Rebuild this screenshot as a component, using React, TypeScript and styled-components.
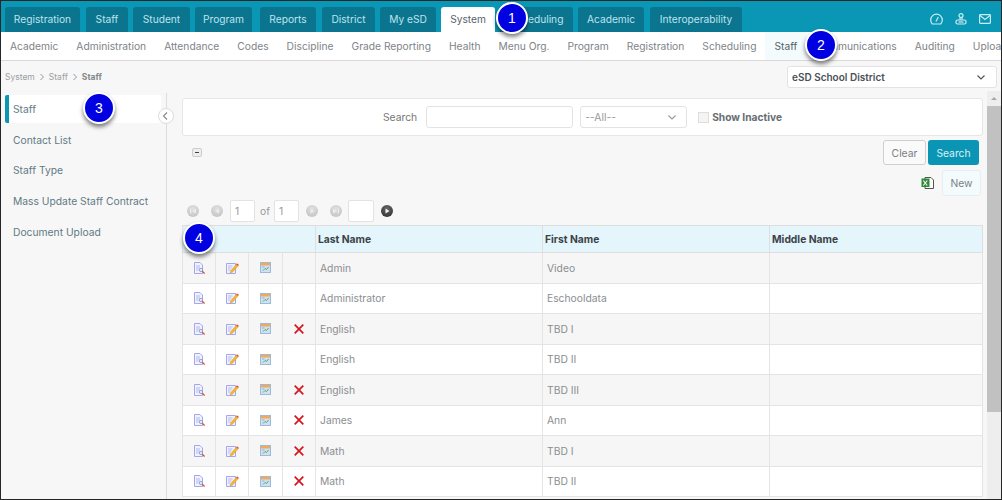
import React from "react";
import styled, { createGlobalStyle } from "styled-components";

const Global = createGlobalStyle`
  html, body { margin: 0; padding: 0; height: 500px; overflow: hidden; background: #f7f7f7; }
  * { box-sizing: border-box; }
  body { font-family: Inter, "Liberation Sans", sans-serif; }
`;
const Page = styled.div`
  position: relative; width: 1002px; height: 500px; overflow: hidden;
  display: flex; flex-direction: column; background: #f7f7f7;
  border: 1px solid #262626;
`;
const TopBar = styled.div`
  height: 31px; flex: none; background: #0a97b5; display: flex; align-items: flex-end; padding-left: 4px;
`;
const TopTab = styled.div<{ $w: number; $ml?: number; $active?: boolean }>`
  width: ${p => p.$w}px; margin-left: ${p => p.$ml ?? 5}px; height: 25px; flex: none;
  display: flex; align-items: center; justify-content: center;
  border-radius: 3px 3px 0 0; font-size: 10.2px; padding-bottom: 1px; white-space: nowrap;
  background: ${p => (p.$active ? "#ffffff" : "#0b7590")};
  color: ${p => (p.$active ? "#56636b" : "#bfe3ec")};
`;
const TopIcons = styled.div`
  margin-left: auto; display: flex; align-items: center; gap: 12px; padding: 0 10px 2px 0; height: 25px; color: #c9edf5;
`;
const SubBar = styled.div`
  height: 29px; flex: none; background: #fff; display: flex; align-items: stretch;
  padding-left: 9px; gap: 18px; border-bottom: 1px solid #d9d9d9; overflow: hidden;
`;
const SubItem = styled.div<{ $active?: boolean }>`
  display: flex; align-items: center; justify-content: center; font-size: 10.26px; color: ${p => (p.$active ? "#4f5f66" : "#7d8488")};
  white-space: nowrap; flex: none; margin-bottom: -1px; padding-bottom: 1px;
  ${p => p.$active ? `background:#f4fbfd;border-bottom:1px solid #0b95b4;padding:0 9px;margin:0 -9px -1px;` : ""}
`;
const Body = styled.div`
  flex: 1; min-height: 0; display: flex;
`;
const Left = styled.div`
  width: 166px; flex: none; display: flex; flex-direction: column;
`;
const Crumbs = styled.div`
  height: 32px; flex: none; padding: 0 0 0 4px; display: flex; align-items: center; gap: 4px;
  font-size: 8.5px; color: #9a9fa3;
  b { color: #85898c; font-weight: 700; }
`;
const SideMenu = styled.div`
  flex: 1; position: relative; border-right: 1px solid #dcdcdc; padding: 2px 5px 0 4px; display: flex; flex-direction: column;
`;
const SideItem = styled.div<{ $active?: boolean }>`
  height: 28px; margin-bottom: 2.7px; display: flex; align-items: center; font-size: 10.3px; color: #5f7a84; padding-left: 8px;
  white-space: nowrap; border-radius: 2px;
  ${p => p.$active ? `background:#fff;border-left:4px solid #0b95b4;padding-left:4px;` : ""}
`;
const Collapse = styled.div`
  position: absolute; right: -8px; top: 15px; width: 16px; height: 16px; border-radius: 50%; background: #fff;
  border: 1px solid #dcdcdc; display: flex; align-items: center; justify-content: center; color: #888;
`;
const Main = styled.div`
  flex: 1; min-width: 0; display: flex; flex-direction: column; position: relative;
`;
const DistrictRow = styled.div`
  height: 30px; flex: none; display: flex; justify-content: flex-end; align-items: flex-start; padding: 5px 4px 0 0;
`;
const DistrictSelect = styled.div`
  width: 210px; height: 22px; background: #fff; border: 1px solid #e3e3e3; border-radius: 3px; display: flex; align-items: center;
  justify-content: space-between; padding: 0 10px 0 4px; font-size: 10px; font-weight: 600; color: #4a5157;
`;
const Content = styled.div`
  flex: 1; min-height: 0; display: flex; padding-left: 15px;
`;
const Column = styled.div`
  width: 801px; flex: none; display: flex; flex-direction: column; padding-top: 7px;
`;
const SearchPanel = styled.div`
  height: 38px; flex: none; background: #fff; border: 1px solid #e6e6e6; border-radius: 3px; display: flex; align-items: center;
  padding-left: 200px; font-size: 10.3px; color: #777;
`;
const SearchLabel = styled.span`
  margin-right: 9px;
`;
const TextInput = styled.div`
  width: 147px; height: 22px; border: 1px solid #e3e3e3; border-radius: 3px; background: #fff;
`;
const SelectBox = styled.div`
  width: 107px; height: 22px; margin-left: 7px; border: 1px solid #e3e3e3; border-radius: 3px; background: #fff; display: flex; align-items: center;
  justify-content: space-between; padding: 0 9px 0 4px; color: #999; font-size: 10.3px;
`;
const CheckBox = styled.div`
  width: 11px; height: 11px; margin-left: 11px; border: 1px solid #ddd; background: #f4f4f4; flex: none;
`;
const CheckLabel = styled.span`
  margin-left: 3px; font-weight: 700; color: #666d73; font-size: 10.2px;
`;
const ActionRow = styled.div`
  height: 31px; flex: none; display: flex; align-items: flex-start; justify-content: space-between; padding: 4px 4px 0 10px;
`;
const MiniToggle = styled.div`
  width: 10px; height: 9px; border: 1px solid #ccc; border-radius: 2px; background: #eee; display: flex; align-items: center; justify-content: center; margin-top: 8px;
  &::after { content: ""; width: 4px; height: 1px; background: #444; }
`;
const Buttons = styled.div`
  display: flex; gap: 2px;
`;
const GhostButton = styled.div`
  width: 43px; height: 25px; border: 1px solid #cfcfcf; border-radius: 3px; background: #fafafa; color: #7a7f83; font-size: 10.3px;
  display: flex; align-items: center; justify-content: center;
`;
const PrimaryButton = styled.div`
  width: 51px; height: 25px; border-radius: 3px; background: #0b95b4; color: #d9f1f6; font-size: 10.3px;
  display: flex; align-items: center; justify-content: center;
`;
const NewRow = styled.div`
  height: 29px; flex: none; display: flex; align-items: center; justify-content: flex-end; gap: 8px; padding: 2px 2px 0 0;
`;
const NewButton = styled.div`
  width: 39px; height: 26px; border: 1px solid #e8eeef; border-radius: 3px; background: #f4fbfd; color: #7a8286; font-size: 10.3px;
  display: flex; align-items: center; justify-content: center;
`;
const Pager = styled.div`
  height: 29px; flex: none; display: flex; align-items: center; padding: 0 0 0 5px; font-size: 10.3px; color: #999;
`;
const PagerDot = styled.div<{ $dark?: boolean; $gap?: number }>`
  width: 12px; height: 12px; border-radius: 50%; margin-left: ${p => p.$gap ?? 0}px; flex: none;
  background: ${p => (p.$dark ? "radial-gradient(circle at 50% 30%, #666, #2d2d2d)" : "radial-gradient(circle at 50% 30%, #e0e0e0, #c0c0c0)")};
  display: flex; align-items: center; justify-content: center; color: ${p => (p.$dark ? "#f4f4f4" : "#ececec")};
`;
const PagerInput = styled.div<{ $gap?: number; $w?: number }>`
  width: ${p => p.$w ?? 25}px; height: 22px; margin-left: ${p => p.$gap ?? 0}px; border: 1px solid #e3e3e3; border-radius: 2px; background: #fff;
  display: flex; align-items: center; padding-left: 4px; font-size: 10.3px; color: #999; flex: none;
`;
const PagerOf = styled.span`
  margin-left: 5px; margin-right: 4px;
`;
const Table = styled.table`
  width: 801px; border-collapse: collapse; table-layout: fixed; border: 1px solid #e2e2e2;
`;
const HeadCell = styled.th`
  height: 27px; padding: 0 0 0 2px; background: #e4f6fb; text-align: left; font-size: 10.3px; font-weight: 700; color: #3b4349;
  border: 1px solid #dedede;
`;
const HeadBlank = styled(HeadCell)`
  border-left: 0; border-right: 0;
`;
const Row = styled.tr<{ $odd: boolean }>`
  background: ${p => (p.$odd ? "#f6f6f6" : "#ffffff")};
`;
const Cell = styled.td`
  height: 30.5px; padding: 0 0 0 4px; border: 1px solid #e4e4e4; font-size: 10.3px; color: #8a8e91; white-space: nowrap;
`;
const IconCell = styled(Cell)`
  padding: 0; text-align: center; line-height: 0;
  svg { display: inline-block; vertical-align: middle; }
`;
const ScrollBar = styled.div`
  width: 14px; flex: none; margin-left: 4px; background: #eeeeee; display: flex; flex-direction: column; align-items: center;
`;
const ScrollUp = styled.div`
  height: 15px; flex: none; display: flex; align-items: center; justify-content: center;
  &::after { content: ""; border-left: 3px solid transparent; border-right: 3px solid transparent; border-bottom: 3px solid #a8a8a8; }
`;
const ScrollThumb = styled.div`
  width: 14px; height: 306px; flex: none; background: #c1c1c1;
`;
const Badge = styled.div<{ $x: number; $y: number }>`
  position: absolute; left: ${p => p.$x}px; top: ${p => p.$y}px; width: 32px; height: 32px; border-radius: 50%;
  background: #0000e0; border: 2px solid #fff; box-shadow: 0 3px 4px rgba(0,0,0,.5);
  color: #fff; font-size: 14px; font-family: "Liberation Sans", sans-serif; display: flex; align-items: center; justify-content: center;
`;

const Chevron = ({ dir = "down" }: { dir?: "down" | "left" }) => {
  const d = dir === "down" ? "M1.5 3.5 5 7l3.5-3.5" : "M6 1.5 2.5 5 6 8.5";
  return <svg width="10" height="10" viewBox="0 0 10 10" fill="none" stroke="currentColor" strokeWidth="1.1"><path d={d} /></svg>;
};
const Sep = () => <svg width="6" height="8" viewBox="0 0 6 8" fill="none" stroke="#999" strokeWidth="1"><path d="M1.5 1 4.5 4 1.5 7" /></svg>;

const PagerGlyph = ({ kind }: { kind: "first" | "prev" | "next" | "last" }) => (
  <svg width="8" height="8" viewBox="0 0 8 8" fill="currentColor">
    {kind === "first" && <path d="M1 1.5h1.2v5H1zM7 1.5v5L3 4z" />}
    {kind === "prev" && <path d="M6 1.5v5L2 4z" />}
    {kind === "next" && <path d="M2.5 1.5v5l4-2.5z" />}
    {kind === "last" && <path d="M5.8 1.5H7v5H5.8zM1 1.5v5L5 4z" />}
  </svg>
);
const ViewIcon = () => (
  <svg width="13" height="12" viewBox="0 0 13 12">
    <path d="M1.5.5h5.5l2.5 2.5v8.5h-8z" fill="#f1f2ff" stroke="#a3a8ee" />
    <path d="M3 4h4M3 6h4M3 8h2.5" stroke="#a4a9e8" strokeWidth=".8" />
    <circle cx="8" cy="8" r="1.7" fill="#dbe9f5" stroke="#7f8eaa" strokeWidth=".7" />
    <path d="M9.3 9.3 11.6 11.4" stroke="#d8503a" strokeWidth="1.3" />
  </svg>
);
const EditIcon = () => (
  <svg width="13" height="12" viewBox="0 0 13 12">
    <path d="M.5 1.5h9v10h-9z" fill="#f1f2ff" stroke="#a3a8ee" />
    <path d="M2 4h4.5M2 6h3.5M2 8h2.5" stroke="#a4a9e8" strokeWidth=".8" />
    <path d="M4.5 9 10 2.5l2 1.6L6.5 10.3l-2.4.6z" fill="#f2b632" stroke="#d2951a" strokeWidth=".4" />
    <path d="M10 2.5l1-1.2 2 1.6-1 1.2z" fill="#e2553a" />
  </svg>
);
const CalIcon = () => (
  <svg width="11" height="11" viewBox="0 0 11 11">
    <rect x=".5" y=".5" width="10" height="10" fill="#cfe0f0" stroke="#9dbada" />
    <rect x="1" y="1" width="9" height="2.5" fill="#f3a95c" />
    <path d="M3 8.5l2-2 1.5 1L8.5 5" fill="none" stroke="#5aa874" strokeWidth="1" />
    <path d="M2 5h2.5" stroke="#9ab3cc" />
  </svg>
);
const XIcon = () => (
  <svg width="10" height="10" viewBox="0 0 10 10" stroke="#d8141e" strokeWidth="1.7" fill="none"><path d="M.7.7l8.6 8.6M9.3.7.7 9.3" /></svg>
);
const ExcelIcon = () => (
  <svg width="13" height="12" viewBox="0 0 13 12">
    <path d="M4 .5h6l2.5 2.5v8.5H4z" fill="#fff" stroke="#555" />
    <rect x=".5" y="1.5" width="8" height="8.5" fill="#2f8a3c" />
    <path d="M2.3 3.5l4 5M6.3 3.5l-4 5" stroke="#fff" strokeWidth="1.1" />
  </svg>
);
const GaugeIcon = () => (
  <svg width="13" height="12" viewBox="0 0 13 12" fill="none" stroke="currentColor" strokeWidth="1.2"><path d="M2.3 11a5.8 5.8 0 1 1 8.4 0z" /><path d="M6 8.5 8.3 4" /></svg>
);
const UserIcon = () => (
  <svg width="12" height="12" viewBox="0 0 12 12" fill="none" stroke="currentColor" strokeWidth="1.2"><circle cx="6" cy="2.6" r="2" /><path d="M5 5v2M7 5v2" /><rect x="1" y="7" width="10" height="4" rx="1.5" /><path d="M3.5 9h5" /></svg>
);
const MailIcon = () => (
  <svg width="12" height="10" viewBox="0 0 12 10" fill="none" stroke="currentColor" strokeWidth="1.2"><rect x=".6" y=".6" width="10.8" height="8.8" rx=".8" /><path d="M1 1.5 6 5.5l5-4" /></svg>
);

const topTabs: { t: string; w: number; ml?: number; active?: boolean }[] = [
  { t: "Registration", w: 75, ml: 0 }, { t: "Staff", w: 42, ml: 6 }, { t: "Student", w: 57 }, { t: "Program", w: 57, ml: 5 },
  { t: "Reports", w: 56, ml: 8 }, { t: "District", w: 53, ml: 6 }, { t: "My eSD", w: 56, ml: 5 }, { t: "System", w: 54, ml: 5, active: true },
  { t: "Scheduling", w: 73, ml: 5 }, { t: "Academic", w: 66, ml: 5 }, { t: "Interoperability", w: 92, ml: 6 },
];
const subItems = ["Academic", "Administration", "Attendance", "Codes", "Discipline", "Grade Reporting", "Health", "Menu Org.", "Program", "Registration", "Scheduling", "Staff", "Communications", "Auditing", "Upload"];
const sideItems = ["Staff", "Contact List", "Staff Type", "Mass Update Staff Contract", "Document Upload"];
const rows: [string, string, boolean][] = [
  ["Admin", "Video", false], ["Administrator", "Eschooldata", false], ["English", "TBD I", true], ["English", "TBD II", false],
  ["English", "TBD III", true], ["James", "Ann", true], ["Math", "TBD I", true], ["Math", "TBD II", true],
];

export default function App() {
  return (
    <Page>
      <Global />
      <TopBar>
        {topTabs.map(t => <TopTab key={t.t} $w={t.w} $ml={t.ml} $active={t.active}>{t.t}</TopTab>)}
        <TopIcons><GaugeIcon /><UserIcon /><MailIcon /></TopIcons>
      </TopBar>
      <SubBar>
        {subItems.map(s => <SubItem key={s} $active={s === "Staff"}>{s}</SubItem>)}
      </SubBar>
      <Body>
        <Left>
          <Crumbs>System <Sep /> Staff <Sep /> <b>Staff</b></Crumbs>
          <SideMenu>
            {sideItems.map((s, i) => <SideItem key={s} $active={i === 0}>{s}</SideItem>)}
            <Collapse><Chevron dir="left" /></Collapse>
          </SideMenu>
        </Left>
        <Main>
          <DistrictRow>
            <DistrictSelect>eSD School District <Chevron /></DistrictSelect>
          </DistrictRow>
          <Content>
            <Column>
              <SearchPanel>
                <SearchLabel>Search</SearchLabel>
                <TextInput />
                <SelectBox>--All-- <Chevron /></SelectBox>
                <CheckBox />
                <CheckLabel>Show Inactive</CheckLabel>
              </SearchPanel>
              <ActionRow>
                <MiniToggle />
                <Buttons><GhostButton>Clear</GhostButton><PrimaryButton>Search</PrimaryButton></Buttons>
              </ActionRow>
              <NewRow><ExcelIcon /><NewButton>New</NewButton></NewRow>
              <Pager>
                <PagerDot><PagerGlyph kind="first" /></PagerDot>
                <PagerDot $gap={12}><PagerGlyph kind="prev" /></PagerDot>
                <PagerInput $gap={7}>1</PagerInput><PagerOf>of</PagerOf><PagerInput>1</PagerInput>
                <PagerDot $gap={7}><PagerGlyph kind="next" /></PagerDot>
                <PagerDot $gap={12}><PagerGlyph kind="last" /></PagerDot>
                <PagerInput $gap={6} $w={26} /><PagerDot $dark $gap={7}><PagerGlyph kind="next" /></PagerDot>
              </Pager>
              <Table>
                <colgroup>
                  <col width="33" /><col width="33" /><col width="34" /><col width="33" /><col width="227" /><col width="227" /><col />
                </colgroup>
                <thead>
                  <tr>
                    <HeadBlank /><HeadBlank /><HeadBlank /><HeadBlank />
                    <HeadCell>Last Name</HeadCell><HeadCell>First Name</HeadCell><HeadCell>Middle Name</HeadCell>
                  </tr>
                </thead>
                <tbody>
                  {rows.map((r, i) => (
                    <Row key={i} $odd={i % 2 === 0}>
                      <IconCell><ViewIcon /></IconCell>
                      <IconCell><EditIcon /></IconCell>
                      <IconCell><CalIcon /></IconCell>
                      <IconCell>{r[2] && <XIcon />}</IconCell>
                      <Cell>{r[0]}</Cell>
                      <Cell>{r[1]}</Cell>
                      <Cell />
                    </Row>
                  ))}
                </tbody>
              </Table>
            </Column>
            <ScrollBar><ScrollUp /><ScrollThumb /></ScrollBar>
          </Content>
        </Main>
      </Body>
      <Badge $x={495} $y={1}>1</Badge>
      <Badge $x={804} $y={28}>2</Badge>
      <Badge $x={82} $y={91}>3</Badge>
      <Badge $x={182} $y={221}>4</Badge>
    </Page>
  );
}
